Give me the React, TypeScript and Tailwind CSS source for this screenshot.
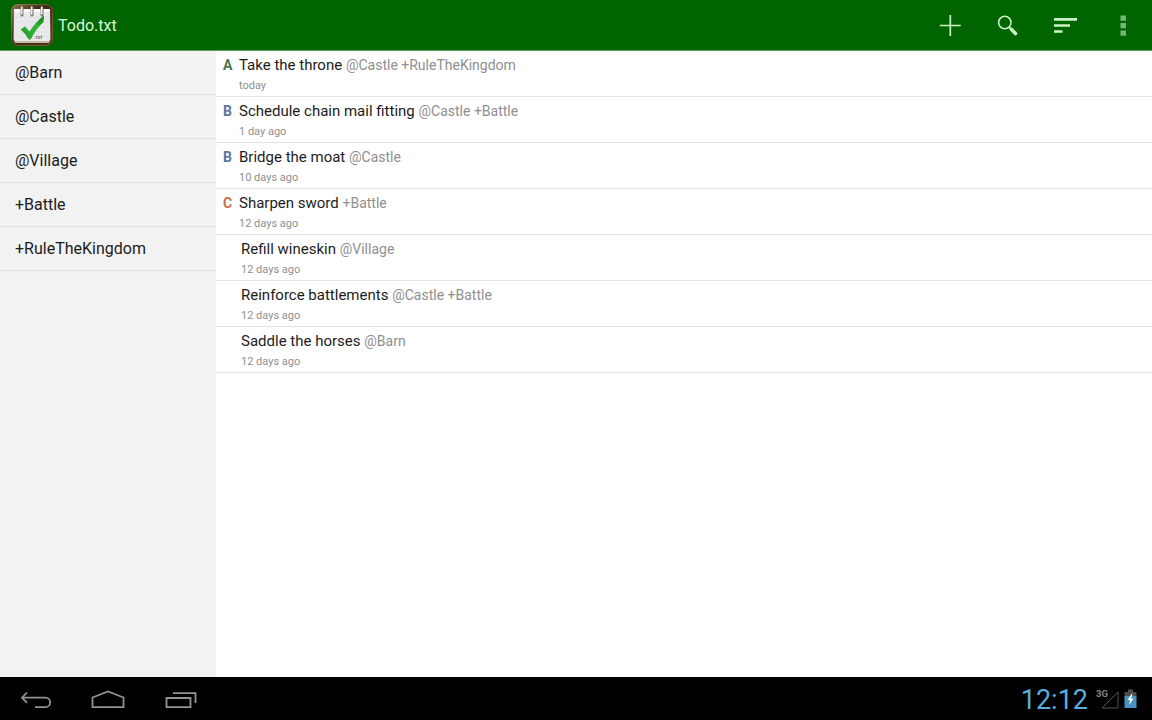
import { useState } from "react";

type Task = {
    priority?: "A" | "B" | "C";
    text: string;
    tags: string;
    age: string;
};

const filters = ["@Barn", "@Castle", "@Village", "+Battle", "+RuleTheKingdom"];

const tasks: Task[] = [
    { priority: "A", text: "Take the throne", tags: "@Castle +RuleTheKingdom", age: "today" },
    { priority: "B", text: "Schedule chain mail fitting", tags: "@Castle +Battle", age: "1 day ago" },
    { priority: "B", text: "Bridge the moat", tags: "@Castle", age: "10 days ago" },
    { priority: "C", text: "Sharpen sword", tags: "+Battle", age: "12 days ago" },
    { text: "Refill wineskin", tags: "@Village", age: "12 days ago" },
    { text: "Reinforce battlements", tags: "@Castle +Battle", age: "12 days ago" },
    { text: "Saddle the horses", tags: "@Barn", age: "12 days ago" },
];

const priorityColors = {
    A: "text-[#4a7550]",
    B: "text-[#5a76a0]",
    C: "text-[#cc6e4c]",
};

function Logo() {
    return (
        <svg width="44" height="44" viewBox="0 0 44 44" aria-hidden="true">
            <defs>
                <linearGradient id="frame" x1="0" y1="0" x2="1" y2="1">
                    <stop offset="0" stopColor="#8a7448" />
                    <stop offset="0.4" stopColor="#3b2512" />
                    <stop offset="1" stopColor="#4a2f16" />
                </linearGradient>
                <linearGradient id="check" x1="0" y1="1" x2="1" y2="0">
                    <stop offset="0" stopColor="#239a2b" />
                    <stop offset="0.6" stopColor="#35b336" />
                    <stop offset="1" stopColor="#16791f" />
                </linearGradient>
            </defs>
            <rect x="1" y="1" width="42" height="42" rx="7" fill="url(#frame)" />
            <rect x="1.7" y="1.7" width="40.6" height="40.6" rx="6.5" fill="none" stroke="#b39a6c" strokeOpacity="0.5" />
            <path d="M4 37h36l-1 3H5z" fill="#c6bda9" />
            <path d="M4 6h36l.5 30q0 2-2 2h-33q-2 0-2-2z" fill="#e9e9ec" />
            <path d="M4 6h36v3H4z" fill="#fafafa" />
            <path d="M4 14h36M4 19h36M4 24h36M4 29h36M4 34h36" stroke="#dcdde2" strokeWidth="0.6" />
            <path d="M12 5v7M22 5v7M32 5v7" stroke="#77716a" strokeWidth="3" strokeLinecap="round" />
            <path d="M11.700 4v7M21.700 4v7M31.700 4v7" stroke="#efefef" strokeWidth="1.600" strokeLinecap="round" />
            <path d="M10.500 26.500l4.500-3 4.500 5Q26 18.500 34 12.500l-.5 6.500Q26 26 21 36l-2 .8Q15.500 30.500 10.500 26.500z" fill="url(#check)" />
            <text x="24" y="35.500" fontSize="6" fontStyle="italic" fill="#555">.txt</text>
        </svg>
    );
}

function ActionButton({ label, children }: { label: string; children: React.ReactNode }) {
    return (
        <button aria-label={label} className="flex w-[58px] items-center justify-center hover:bg-white/10">
            {children}
        </button>
    );
}

function NavButton({ label, children }: { label: string; children: React.ReactNode }) {
    return (
        <button aria-label={label} className="flex w-[72px] items-center justify-center">
            <svg width="36" height="24" viewBox="0 0 36 24" fill="none" stroke="#949494" strokeWidth="1.8">
                {children}
            </svg>
        </button>
    );
}

export default function App() {
    const [active, setActive] = useState<string | null>(null);
    const shown = active ? tasks.filter((t) => t.tags.split(" ").includes(active)) : tasks;

    return (
        <div className="flex min-h-screen flex-col bg-white font-[Roboto,sans-serif] text-[#1c1c1c]">
            <header className="flex h-[51px] items-stretch border-b border-[#5d9a5d] bg-[#006400] pl-[10px]">
                <div className="flex flex-1 items-center gap-1">
                    <Logo />
                    <h1 className="pt-0.5 text-base text-[#d9f5d9]">Todo.txt</h1>
                </div>
                <ActionButton label="Add">
                    <svg width="24" height="24" viewBox="0 0 24 24" stroke="#c9f3c4" strokeWidth="1.7">
                        <path d="M13.300 2v21M2.800 12.500h21" />
                    </svg>
                </ActionButton>
                <ActionButton label="Search">
                    <svg width="24" height="24" viewBox="0 0 24 24" fill="none" stroke="#c9f3c4">
                        <circle cx="9.800" cy="9.500" r="6.200" strokeWidth="1.600" />
                        <path d="M14 14l2.500 2.500" strokeWidth="1.800" />
                        <path d="M16.500 16.500l4 4" strokeWidth="3.600" strokeLinecap="round" />
                    </svg>
                </ActionButton>
                <ActionButton label="Sort">
                    <svg width="24" height="24" viewBox="0 0 24 24" fill="#c9f3c4">
                        <path d="M1 5h23v2.800H1zM1 11.200h16v2.500H1zM1 17.300h8.500v2.500H1z" />
                    </svg>
                </ActionButton>
                <ActionButton label="More options">
                    <svg width="24" height="24" viewBox="0 0 24 24" fill="#75b575">
                        <path d="M9.500 2.500h5.500v5.200H9.500zM9.500 10h5.500v5.200H9.500zM9.500 17.500h5.500v5.200H9.500z" />
                    </svg>
                </ActionButton>
            </header>

            <div className="flex flex-1">
                <nav className="w-[216px] shrink-0 bg-[#f2f2f2]">
                    {filters.map((f) => (
                        <button
                            key={f}
                            onClick={() => setActive(active === f ? null : f)}
                            className="flex h-11 w-full items-center border-b border-[#dedede] pt-px pl-[15px] text-base"
                        >
                            {f}
                        </button>
                    ))}
                </nav>

                <main className="flex-1">
                    <ul>
                        {shown.map((t) => (
                            <li key={t.text} className="flex border-b border-[#e2e2e2] pt-1 pb-0.5 pl-[7px]">
                                <span
                                    className={
                                        t.priority
                                            ? `w-4 text-sm leading-5 font-bold ${priorityColors[t.priority]}`
                                            : "w-[18px]"
                                    }
                                >
                                    {t.priority}
                                </span>
                                <div>
                                    <p className="text-[15px] leading-5">
                                        {t.text} <span className="text-sm leading-5 text-[#8f8f8f]">{t.tags}</span>
                                    </p>
                                    <p className="mt-[3px] text-[11px] leading-4 text-[#8f8f8f]">{t.age}</p>
                                </div>
                            </li>
                        ))}
                    </ul>
                </main>
            </div>

            <footer className="flex h-[43px] items-stretch justify-between bg-black pr-[15px]">
                <div className="flex">
                    <NavButton label="Back">
                        <path d="M9 5.500L4 10.700l5 5.200M4.500 10.700H27.500a4.700 4.700 0 0 1 0 9.400H17" />
                    </NavButton>
                    <NavButton label="Home">
                        <path d="M2.500 20.200V10.500L18 4.500l15.500 6v9.700z" />
                    </NavButton>
                    <NavButton label="Recent apps">
                        <path d="M4.500 11h24v9.200h-24z" />
                        <path d="M11 6.200h22.500V16" />
                    </NavButton>
                </div>
                <div className="flex items-center gap-2">
                    <time className="pt-[3px] text-[27px] text-[#5aaede]">12:12</time>
                    <div className="flex items-center gap-1">
                        <svg width="24" height="24" viewBox="0 0 24 24" aria-label="3G signal">
                            <text x="0" y="10" fontSize="9.500" fontWeight="700" fill="#858585">3G</text>
                            <path d="M22 5v16H6z" fill="none" stroke="#555" />
                        </svg>
                        <svg width="13" height="22" viewBox="0 0 13 22" aria-label="Battery charging">
                            <path d="M4 1.500h5V4h3.500v5H.5V4H4z" fill="#4c4c4c" />
                            <path d="M.5 8h12v12H.5z" fill="#4593be" />
                            <path d="M7.500 6L3.500 12h2.500l-1 5 4.500-6.500H7L8.500 6z" fill="#fff" />
                        </svg>
                    </div>
                </div>
            </footer>
        </div>
    );
}
